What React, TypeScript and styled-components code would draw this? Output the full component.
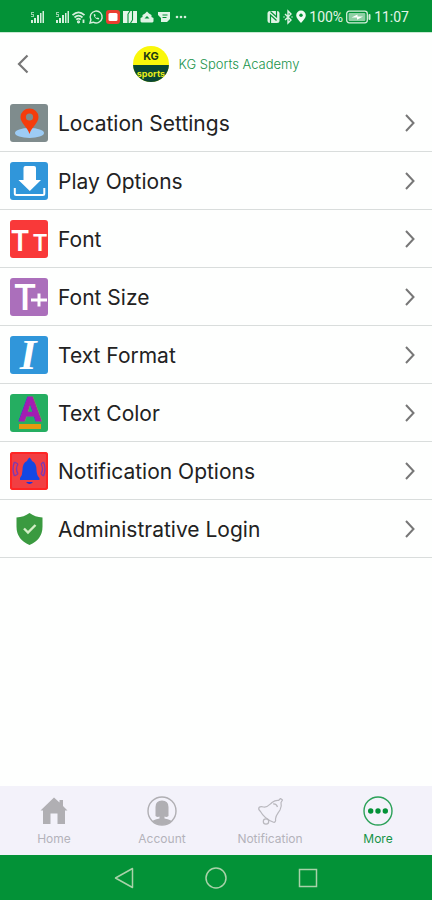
import React from "react";
import styled, { createGlobalStyle } from "styled-components";

const GREEN = "#039237";

const GlobalStyle = createGlobalStyle`
  * { box-sizing: border-box; }
  body { margin: 0; background: #fff; font-family: Inter, "Liberation Sans", sans-serif; }
  svg { display: block; flex: none; overflow: visible; }
`;

const Screen = styled.div`
  min-height: 100vh;
  display: flex;
  flex-direction: column;
  background: #fefffe;
`;

const StatusBar = styled.div`
  height: 33px;
  padding: 2px 23px 0 30px;
  display: flex;
  align-items: center;
  justify-content: space-between;
  background: ${GREEN};
  border-bottom: 1px solid #c9e9d3;
  color: #e3f5e8;
  font: 400 14px/16px Roboto, sans-serif;
`;

const StatusGroup = styled.div`
  display: flex;
  align-items: center;
  gap: 3px;
`;

const SimSlot = styled.span`
  margin-right: 8px;
`;

const Header = styled.header`
  height: 61px;
  padding: 0 16px;
  display: grid;
  grid-template-columns: 24px 1fr 24px;
  align-items: center;
`;

const BackButton = styled.button`
  padding: 0;
  border: 0;
  background: none;
  cursor: pointer;
`;

const Brand = styled.div`
  display: flex;
  align-items: center;
  justify-content: center;
  gap: 10px;
`;

const BrandName = styled.h1`
  margin: 0;
  font: 300 13px/16px Inter, sans-serif;
  color: #17934a;
`;

const Menu = styled.ul`
  flex: 1;
  margin: 0;
  padding: 0 0 24px;
  list-style: none;
`;

const MenuRow = styled.button`
  width: 100%;
  height: 58px;
  padding: 0 16px 0 10px;
  display: flex;
  align-items: center;
  gap: 10px;
  border: 0;
  border-bottom: 1px solid #d9dddc;
  background: none;
  color: #222;
  text-align: left;
  cursor: pointer;
`;

const MenuLabel = styled.span`
  flex: 1;
  padding-top: 3px;
  font: 400 21px/28px Inter, sans-serif;
`;

const TabBar = styled.nav`
  height: 69px;
  display: grid;
  grid-template-columns: repeat(4, 1fr);
  background: #f3f2fa;
`;

const Tab = styled.a<{ $active?: boolean }>`
  padding-top: 9px;
  display: flex;
  flex-direction: column;
  align-items: center;
  gap: 4px;
  font: 400 12px/16px Inter, sans-serif;
  color: ${(p) => (p.$active ? "#159447" : "#b4b3ba")};
  text-decoration: none;
`;

const SystemNav = styled.div`
  height: 45px;
  display: flex;
  align-items: center;
  justify-content: center;
  gap: 68px;
  background: ${GREEN};
`;

const SystemButton = styled.button`
  padding: 0;
  border: 0;
  background: none;
  cursor: pointer;
`;

const Signal = () => (
  <svg width="14" height="14" viewBox="0 0 14 14" fill="#d5efdc">
    <path d="M1 10h2v3H1zM4 8h2v5H4zM7 5h2v8H7zM10 3h1.500v10H10zM12.500 1H14v12h-1.500z" />
    <path d="M1 2h3v1H2v1h2v3H1V6h2V5H1z" opacity=".7" />
  </svg>
);

const Wifi = () => (
  <svg width="14" height="14" viewBox="0 0 14 14" fill="none" stroke="#d5efdc" strokeWidth="1.800">
    <path d="M.5 5.200Q6.500-.5 12.500 5.200M2.500 7.500Q6.500 3.700 10.500 7.500M4.300 9.700Q6.500 7.600 8.700 9.700" />
    <circle cx="6.500" cy="11.800" r=".7" />
    <path d="M11.500 9.500v3.500" />
  </svg>
);

const WhatsApp = () => (
  <svg width="14" height="14" viewBox="0 0 14 14" fill="none" stroke="#d5efdc" strokeWidth="1.400">
    <path d="M1 13l.9-3.200A6 6 0 1 1 4.200 12.200z" />
    <path d="M4.700 4.300c0 2.700 2.300 5 5 5.200l.6-1.300-1.600-.8-.8.7Q6.500 7.500 6 6.200l.7-.8L6 3.900z" fill="#d5efdc" stroke="none" />
  </svg>
);

const RedApp = () => (
  <svg width="14" height="14" viewBox="0 0 14 14">
    <rect width="14" height="14" rx="3" fill="#ea3e30" />
    <rect x="2.500" y="3" width="9" height="8" rx="1.500" fill="#fff" />
  </svg>
);

const NewsApp = () => (
  <svg width="14" height="14" viewBox="0 0 14 14">
    <rect x="0" y="1" width="14" height="12" fill="#e3f5e8" />
    <path d="M5 13V4M9.500 10V1M5 4l2-3M7.500 13l2-3" stroke={GREEN} strokeWidth="1.100" fill="none" />
  </svg>
);

const DriveApp = () => (
  <svg width="14" height="14" viewBox="0 0 14 14" fill="#dff3e5">
    <path d="M2.500 7V5L5 3.500 7 1.500l2 2L11.500 5v2l2 1v3.500l-1 1h-11l-1-1V8z" />
    <path d="M4.500 8.500L7 6l2.500 2.500z" fill={GREEN} />
  </svg>
);

const ChatApp = () => (
  <svg width="14" height="14" viewBox="0 0 14 14">
    <path d="M1 2h12v7l-3 3H4V8L1 5z" fill="#dff3e5" />
    <path d="M5.500 5h5M5.500 7.500h4" stroke={GREEN} />
  </svg>
);

const Ellipsis = () => (
  <svg width="14" height="14" viewBox="0 0 14 14" fill="#d5efdc">
    <circle cx="3" cy="7" r="1.300" />
    <circle cx="7" cy="7" r="1.300" />
    <circle cx="11" cy="7" r="1.300" />
  </svg>
);

const Nfc = () => (
  <svg width="13" height="14" viewBox="0 0 13 14">
    <rect x=".5" y="1" width="12" height="12" rx="2.500" fill="#dff3e5" />
    <path d="M3.500 13V5l6 5.500M3.500 1.500 9.500 7V1" stroke={GREEN} strokeWidth="1.200" fill="none" />
  </svg>
);

const Bluetooth = () => (
  <svg width="10" height="14" viewBox="0 0 10 14" fill="none" stroke="#dff3e5" strokeWidth="1.400">
    <path d="M2 4l6 6-3 3V1l3 3-6 6M.5 7h1M8.500 7h1" />
  </svg>
);

const Place = () => (
  <svg width="10" height="14" viewBox="0 0 10 14">
    <path d="M5 13C2.500 10 .2 7.800.2 5.400a4.800 4.800 0 0 1 9.600 0C9.800 7.800 7.500 10 5 13z" fill="#f2fbf4" />
    <circle cx="5" cy="5.300" r="1.700" fill={GREEN} />
  </svg>
);

const Battery = () => (
  <svg width="25" height="14" viewBox="0 0 25 14">
    <rect x=".7" y="1.200" width="20.600" height="11.600" rx="2.500" fill="none" stroke="#d5efdc" strokeWidth="1.300" />
    <rect x="2.600" y="3" width="16.800" height="8" rx="1" fill="#8fd0a5" />
    <path d="M5.500 7.500l6-3v2h5.500l-6 3.200v-2.200z" fill="#fff" />
    <rect x="22.500" y="4" width="2" height="6" rx="1" fill="#d5efdc" />
  </svg>
);

const Logo = () => (
  <svg width="36" height="36" viewBox="0 0 36 36" role="img" aria-label="KG Sports">
    <defs>
      <clipPath id="logo-disc">
        <circle cx="18" cy="18" r="18" />
      </clipPath>
    </defs>
    <g clipPath="url(#logo-disc)" textAnchor="middle" fontFamily="Inter, sans-serif">
      <rect width="36" height="36" fill="#faf70a" />
      <rect y="19" width="36" height="17" fill="#084733" />
      <text x="18" y="14" fontSize="11" fontWeight="700" fill="#223b12">KG</text>
      <text x="18" y="31" fontSize="9" fontWeight="700" fill="#e7ec1a">sports</text>
    </g>
  </svg>
);

const Tile = ({ fill, children }: { fill: string; children: React.ReactNode }) => (
  <svg width="38" height="38" viewBox="0 0 38 38" aria-hidden="true">
    <rect width="38" height="38" rx="3" fill={fill} />
    {children}
  </svg>
);

const LocationIcon = () => (
  <Tile fill="#7f8c8d">
    <ellipse cx="19.500" cy="29" rx="14.500" ry="5" fill="#9dccf5" />
    <path d="M19.500 30C17.500 23 10.500 19 10.500 13a9 8.500 0 0 1 18 0c0 6-7 10-9 17z" fill="#f53c0c" />
    <circle cx="19.500" cy="13" r="3.600" fill="#7f8c8d" />
  </Tile>
);

const DownloadIcon = () => (
  <Tile fill="#3096da">
    <path d="M13.500 6q0-2 2-2h8.500q2 0 2 2v12h5L19.800 29 8.500 18h5z" fill="#fff" />
    <path d="M4.800 26v5.500q0 1.500 1.500 1.500h26.500q1.500 0 1.500-1.500V26" fill="none" stroke="#fff" strokeWidth="2" />
  </Tile>
);

const FontIcon = () => (
  <Tile fill="#f93939">
    <g fill="#fff" fontFamily="Inter, sans-serif" fontWeight="600" textAnchor="middle">
      <text x="10" y="31" fontSize="29">T</text>
      <text x="30" y="31" fontSize="23">T</text>
    </g>
  </Tile>
);

const FontSizeIcon = () => (
  <Tile fill="#ab6fbb">
    <g fill="#fff" fontFamily="Inter, sans-serif" fontWeight="600" textAnchor="middle">
      <text x="15" y="32" fontSize="35">T</text>
    </g>
    <path d="M29 15.500v13M21 22h16" stroke="#fff" strokeWidth="3" />
  </Tile>
);

const FormatIcon = () => (
  <Tile fill="#3096da">
    <text x="18" y="33" fill="#fff" fontFamily="Liberation Serif, serif" fontStyle="italic" fontWeight="700" fontSize="43" textAnchor="middle">I</text>
  </Tile>
);

const ColorIcon = () => (
  <Tile fill="#25ae61">
    <text x="20" y="27" fill="#a31cb3" stroke="#a31cb3" strokeWidth="1" fontFamily="Roboto, sans-serif" fontWeight="700" fontSize="33" textAnchor="middle">A</text>
    <rect x="9" y="30" width="22" height="5" fill="#e59a0f" />
  </Tile>
);

const BellIcon = () => (
  <Tile fill="#f13f43">
    <rect x="1" y="1" width="36" height="36" rx="2" fill="none" stroke="#ff2525" strokeWidth="2" />
    <path d="M10 26q2.500-3 2.500-8 0-7 4.500-9l1-2 1.500-1.500L21 7l1 2q4.500 2 4.500 9 0 5 3 8v2H10z" fill="#1448e3" />
    <path d="M16 30h7q-3.500 4-7 0z" fill="#1438e3" />
    <g fill="none" stroke="#8138ae" strokeWidth="1.400">
      <path d="M4.500 10q-3 7 0 14M8 12q-3 5 0 10M4.500 10l3.500 2M4.500 24l3.500-2" />
      <path d="M33.500 10q3 7 0 14M31 12q3 5 0 10M33.500 10L31 12M33.500 24L31 22" />
    </g>
  </Tile>
);

const ShieldIcon = () => (
  <svg width="38" height="38" viewBox="0 0 38 38" aria-hidden="true">
    <path d="M19.500 3q5.500 4 13 4.500v9q0 13-13 18.500Q6.500 29.500 6.500 16.500v-9Q14 7 19.500 3z" fill="#3a9a40" />
    <path d="M14 18.500l4 4 7.500-7.500" fill="none" stroke="#d3efc6" strokeWidth="2.400" />
  </svg>
);

const Chevron = () => (
  <svg width="12" height="18" viewBox="0 0 12 18" fill="none" stroke="#777" strokeWidth="2" aria-hidden="true">
    <path d="M2 1l7.500 8L2 17" />
  </svg>
);

const HomeIcon = () => (
  <svg width="32" height="32" viewBox="0 0 32 32" fill="#b0afb3" aria-hidden="true">
    <path d="M16 2.500l5.500 5V5H25v6l4.500 4.500H27V29h-7.500V18.500h-7V29H5V15.500H2.500z" />
  </svg>
);

const AccountIcon = () => (
  <svg width="32" height="32" viewBox="0 0 32 32" aria-hidden="true">
    <defs>
      <clipPath id="account-disc">
        <circle cx="16" cy="16" r="14" />
      </clipPath>
    </defs>
    <circle cx="16" cy="16" r="14" fill="none" stroke="#b0afb3" strokeWidth="1.400" />
    <g clipPath="url(#account-disc)" fill="#b0afb3">
      <path d="M9.500 21v-9q0-6.500 6.500-6.500t6.500 6.500v9q-2 1.500-4 .5v2q7 1 9.500 4.500v4H4v-4Q6.500 24.500 13.500 23.500v-2q-2 1-4-.5z" />
    </g>
  </svg>
);

const NotificationIcon = () => (
  <svg width="32" height="32" viewBox="0 0 32 32" fill="none" stroke="#b9b8be" strokeWidth="1.200" strokeLinejoin="round" aria-hidden="true">
    <path d="M6.500 16.500q-2.500-2-1.500-4 1.500-1.500 4.500-.5c3.500 1 5.500-2 8.500-4.500q3.500-2.500 6.500-2l2-2 2 1.500-1.500 2.500q1 4-1 7.500c-2.500 4-4.500 5.500-4.500 9 .5 2-.5 4-2.500 3-5-2-9.500-5-12.500-10.500z" />
    <circle cx="12" cy="26.500" r="2.700" />
    <path d="M19 9q3.500-.5 4.500 3" />
  </svg>
);

const MoreIcon = () => (
  <svg width="32" height="32" viewBox="0 0 32 32" fill="#039237" aria-hidden="true">
    <circle cx="16" cy="16" r="14" fill="none" stroke="#2ba158" strokeWidth="1.400" />
    <circle cx="8.700" cy="16" r="2.700" />
    <circle cx="16" cy="16" r="2.700" />
    <circle cx="23.300" cy="16" r="2.700" />
  </svg>
);

const items = [
  { label: "Location Settings", Icon: LocationIcon },
  { label: "Play Options", Icon: DownloadIcon },
  { label: "Font", Icon: FontIcon },
  { label: "Font Size", Icon: FontSizeIcon },
  { label: "Text Format", Icon: FormatIcon },
  { label: "Text Color", Icon: ColorIcon },
  { label: "Notification Options", Icon: BellIcon },
  { label: "Administrative Login", Icon: ShieldIcon },
];

const tabs = [
  { label: "Home", Icon: HomeIcon },
  { label: "Account", Icon: AccountIcon },
  { label: "Notification", Icon: NotificationIcon },
  { label: "More", Icon: MoreIcon, active: true },
];

export default function App() {
  return (
    <Screen>
      <GlobalStyle />
      <StatusBar>
        <StatusGroup>
          <SimSlot><Signal /></SimSlot>
          <Signal />
          <Wifi />
          <WhatsApp />
          <RedApp />
          <NewsApp />
          <DriveApp />
          <ChatApp />
          <Ellipsis />
        </StatusGroup>
        <StatusGroup>
          <Nfc />
          <Bluetooth />
          <Place />
          <span>100%</span>
          <Battery />
          <span>11:07</span>
        </StatusGroup>
      </StatusBar>
      <Header>
        <BackButton type="button" aria-label="Back">
          <svg width="14" height="20" viewBox="0 0 14 20" fill="none" stroke="#777" strokeWidth="2.200">
            <path d="M11.500 1.500L3 10l8.500 8.500" />
          </svg>
        </BackButton>
        <Brand>
          <Logo />
          <BrandName>KG Sports Academy</BrandName>
        </Brand>
      </Header>
      <Menu>
        {items.map(({ label, Icon }) => (
          <li key={label}>
            <MenuRow type="button">
              <Icon />
              <MenuLabel>{label}</MenuLabel>
              <Chevron />
            </MenuRow>
          </li>
        ))}
      </Menu>
      <TabBar>
        {tabs.map(({ label, Icon, active }) => (
          <Tab key={label} href="#" $active={active} aria-current={active ? "page" : undefined}>
            <Icon />
            {label}
          </Tab>
        ))}
      </TabBar>
      <SystemNav>
        <SystemButton type="button" aria-label="System back">
          <svg width="24" height="24" viewBox="0 0 24 24" fill="none" stroke="#a9d2a9" strokeWidth="1.500" strokeLinejoin="round">
            <path d="M20.500 2.500v19L3.500 12z" />
          </svg>
        </SystemButton>
        <SystemButton type="button" aria-label="System home">
          <svg width="24" height="24" viewBox="0 0 24 24" fill="none" stroke="#a9d2a9" strokeWidth="1.500">
            <circle cx="12" cy="12" r="10" />
          </svg>
        </SystemButton>
        <SystemButton type="button" aria-label="Recent apps">
          <svg width="24" height="24" viewBox="0 0 24 24" fill="none" stroke="#a9d2a9" strokeWidth="1.500">
            <rect x="3.500" y="3.500" width="17" height="17" />
          </svg>
        </SystemButton>
      </SystemNav>
    </Screen>
  );
}
